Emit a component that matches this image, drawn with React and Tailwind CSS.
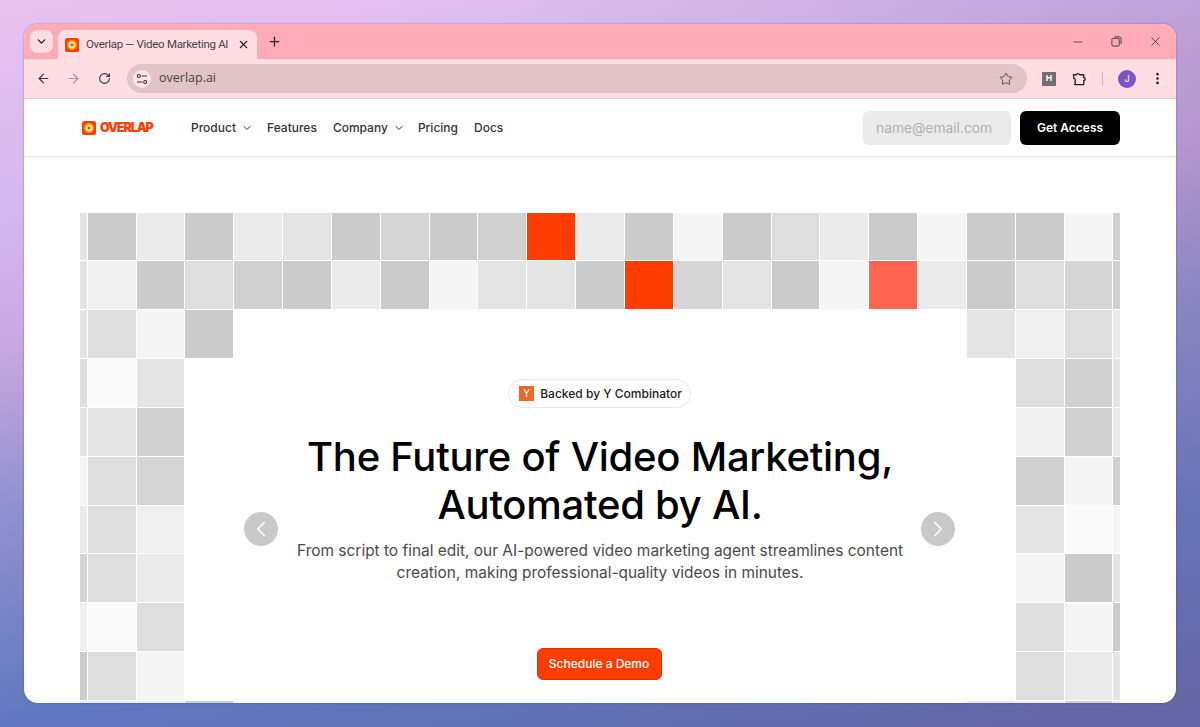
import { ChevronDown, ChevronLeft, ChevronRight, ArrowLeft, ArrowRight, RotateCw, Star, X, Plus, Minus, EllipsisVertical } from "lucide-react";

const tones = {
  a: "bg-[#cbcbcb]",
  b: "bg-[#d0d0d0]",
  c: "bg-[#d5d5d5]",
  d: "bg-[#dedede]",
  e: "bg-[#e4e4e4]",
  f: "bg-[#ebebeb]",
  g: "bg-[#f0f0f0]",
  h: "bg-[#f5f5f5]",
  i: "bg-[#fafafa]",
  r: "bg-[#ff3d00]",
  s: "bg-[#ff6450]",
  _: "bg-transparent",
};

const topRows = "eafafeacabrfahadfahaahb" + "egadbafaheearceahsfadcb" + "edha" + "_".repeat(15) + "egdf";
const sideRows = [
  ["die", "dbe"],
  ["eeb", "gbf"],
  ["hdc", "bhb"],
  ["fdg", "eih"],
  ["cdf", "hae"],
  ["gid", "dha"],
  ["adh", "dfe"],
];
const bottomRow = "fffb" + "_".repeat(15) + "fgbf";

function Cell({ tone }) {
  return <div className={tones[tone]} />;
}

function Favicon({ className }) {
  return (
    <svg viewBox="0 0 16 16" className={className}>
      <rect width="16" height="16" rx="3" fill="#ff3d00" />
      <circle cx="8" cy="8" r="5.6" fill="#ff9a1a" />
      <circle cx="8" cy="8" r="4.2" fill="#ffd84a" />
      <circle cx="8" cy="8" r="3" fill="#fff3d0" />
      <circle cx="8" cy="8" r="1.6" fill="#ff3d00" />
    </svg>
  );
}

function BrowserChrome() {
  return (
    <>
      <div className="h-[35px] bg-[#ffabb8] flex items-end pl-[6px] shrink-0">
        <button className="w-[23px] h-[23px] mb-[6px] rounded-lg bg-[#ffdde3] flex items-center justify-center">
          <ChevronDown size={13} strokeWidth={2.5} className="text-[#222]" />
        </button>
        <div className="w-[199px] h-[29px] ml-[5px] rounded-t-lg bg-[#ffdde3] flex items-center pl-[7px] pr-[7px]">
          <Favicon className="w-[14px] h-[14px] shrink-0" />
          <span className="ml-[7px] text-[11.5px] tracking-[-0.3px] text-[#444] whitespace-nowrap font-['Roboto',sans-serif]">Overlap — Video Marketing AI</span>
          <X size={13} strokeWidth={2} className="ml-auto text-[#222]" />
        </div>
        <Plus size={15} strokeWidth={2} className="ml-[10px] mb-[10px] text-[#222]" />
        <div className="ml-auto flex items-center mb-[10px] text-[#333]">
          <Minus size={14} strokeWidth={1.25} />
          <svg viewBox="0 0 12 12" className="w-[11px] h-[11px] ml-[26px]" fill="none" stroke="currentColor" strokeWidth="1">
            <rect x="1" y="2.5" width="8" height="8.5" rx="1.5" />
            <path d="M3.5 1h5.5a2 2 0 0 1 2 2v5.5" />
          </svg>
          <X size={15} strokeWidth={1.25} className="ml-[26px] mr-[13px]" />
        </div>
      </div>
      <div className="h-[40px] bg-[#ffdde3] border-b border-[#e3c6cd] flex items-center pl-[12px] pr-[10px] shrink-0 text-[#333]">
        <ArrowLeft size={15} strokeWidth={1.75} />
        <ArrowRight size={15} strokeWidth={1.75} className="ml-[15px] text-[#a09398]" />
        <RotateCw size={13} strokeWidth={2} className="ml-[17px]" />
        <div className="ml-[16px] w-[900px] h-[29px] rounded-full bg-[#e2c4c8] flex items-center pl-[6px] pr-[14px]">
          <span className="w-[18px] h-[18px] rounded-full bg-[#ffe3e8] flex items-center justify-center">
            <svg viewBox="0 0 12 12" className="w-[12px] h-[12px]" fill="none" stroke="#333" strokeWidth="1.1">
              <circle cx="2.8" cy="3" r="1.5" />
              <path d="M5.5 3h5.5" />
              <path d="M1 9h5.5" />
              <circle cx="9.2" cy="9" r="1.5" />
            </svg>
          </span>
          <span className="ml-[8px] text-[12.5px] text-[#444] font-['Open_Sans',sans-serif]">overlap.ai</span>
          <Star size={14} strokeWidth={1.5} className="ml-auto text-[#444]" />
        </div>
        <span className="ml-[15px] w-[14px] h-[14px] bg-[#6f6f6f] text-white text-[9px] font-bold flex items-center justify-center font-['Liberation_Sans',sans-serif]">H</span>
        <svg viewBox="0 0 16 16" className="w-[15px] h-[15px] ml-[16px]" fill="none" stroke="#222" strokeWidth="1.4" strokeLinejoin="round">
          <path d="M1.5 4h3.2a1.9 1.9 0 0 1 3.6 0h4.2v3.2a1.6 1.6 0 0 1 0 3.2v4.1H2.7a2 2 0 0 0 .3-3.2 2 2 0 0 0-1-3.4z" />
        </svg>
        <span className="ml-[15px] w-px h-[14px] bg-[#f5a8b6]" />
        <span className="ml-[15px] w-[18px] h-[18px] rounded-full bg-[#7a55c4] text-[#e6dcf8] text-[9px] font-semibold flex items-center justify-center font-['Inter',sans-serif]">J</span>
        <EllipsisVertical size={15} strokeWidth={2.25} className="ml-[14px] text-[#222]" />
      </div>
    </>
  );
}

function Navbar() {
  return (
    <header className="h-[58px] border-b border-[#e2e2e2] flex items-center pl-[58px] pr-[56px] shrink-0">
      <Favicon className="w-[14px] h-[14px] shrink-0" />
      <span className="ml-[4px] mt-px w-[91px] text-[12.5px] font-black tracking-[-1.1px] text-[#ff3d00] leading-none">OVERLAP</span>
      <nav className="flex items-center text-[12px] font-medium text-[#333]">
        <a className="flex items-center gap-[5px]">Product <ChevronDown size={12} /></a>
        <a className="ml-[14px]">Features</a>
        <a className="ml-[16px] flex items-center gap-[5px]">Company <ChevronDown size={12} /></a>
        <a className="ml-[13px]">Pricing</a>
        <a className="ml-[16px]">Docs</a>
      </nav>
      <div className="ml-auto flex items-center gap-[9px]">
        <input
          placeholder="name@email.com"
          className="w-[148px] h-[34px] rounded-md bg-[#ebebeb] px-[13px] text-[13.8px] placeholder:text-[#b0b0b0] outline-none"
        />
        <button className="w-[100px] h-[34px] rounded-md bg-black text-white text-[12px] font-semibold">Get Access</button>
      </div>
    </header>
  );
}

function Hero() {
  return (
    <div className="col-span-17 row-span-7 relative flex flex-col items-center pt-[20px]">
      <div className="h-[29px] w-[183px] mr-[2px] pl-[3px] rounded-full border border-[#e8e8e8] flex items-center justify-center gap-[6px] text-[12px] font-medium text-[#222]">
        <span className="w-[15px] h-[15px] bg-[#f26625] text-white text-[10px] font-normal flex items-center justify-center">Y</span>
        Backed by Y Combinator
      </div>
      <h1 className="mt-[25px] text-center text-[40px] leading-[48px] font-[450] tracking-[-0.25px] text-black whitespace-nowrap">
        The Future of Video Marketing,
        <br />
        Automated by AI.
      </h1>
      <p className="mt-[11px] text-center text-[15.45px] leading-[22px] text-[#4a4a4a] whitespace-nowrap">
        From script to final edit, our AI-powered video marketing agent streamlines content
        <br />
        creation, making professional-quality videos in minutes.
      </p>
      <button className="mt-[64px] w-[125px] h-[32px] mr-[2px] rounded-md bg-[#ff3d00] border border-[#d93600] text-white text-[12px] font-medium">
        Schedule a Demo
      </button>
      <button className="absolute left-[59px] top-[153px] w-[34px] h-[34px] rounded-full bg-[#c9c9c9] flex items-center justify-center">
        <ChevronLeft size={26} strokeWidth={1.5} className="text-white" />
      </button>
      <button className="absolute right-[60px] top-[153px] w-[34px] h-[34px] rounded-full bg-[#c9c9c9] flex items-center justify-center">
        <ChevronRight size={26} strokeWidth={1.5} className="text-white" />
      </button>
    </div>
  );
}

export default function App() {
  return (
    <div className="w-[1200px] h-[727px] overflow-hidden pt-[24px] px-[24px] font-['Inter',sans-serif] bg-[linear-gradient(to_right,rgba(120,100,150,0)_40%,rgba(120,100,150,0.25)_100%),linear-gradient(170deg,#e8c2f0_0%,#d4b8ee_22%,#c8a8e0_37%,#9492d0_53%,#6078c0_77%,#5f66a8_100%)]">
      <div className="h-[679px] rounded-[14px] overflow-hidden bg-white flex flex-col shadow-[0_0_2px_rgba(60,40,90,0.5)]">
        <BrowserChrome />
        <Navbar />
        <main className="flex-1 overflow-hidden px-[56px] pt-[55.5px]">
          <div className="grid grid-cols-[6.7px_repeat(21,47.85px)_6.4px] auto-rows-[47.85px] gap-px">
            {topRows.split("").map((t, i) => <Cell key={i} tone={t} />)}
            {sideRows.map(([left, right], i) => (
              <div key={i} className="contents">
                {left.split("").map((t, j) => <Cell key={j} tone={t} />)}
                {i === 0 && <Hero />}
                {right.split("").map((t, j) => <Cell key={j} tone={t} />)}
              </div>
            ))}
            {bottomRow.split("").map((t, i) => <Cell key={i} tone={t} />)}
          </div>
        </main>
      </div>
    </div>
  );
}
